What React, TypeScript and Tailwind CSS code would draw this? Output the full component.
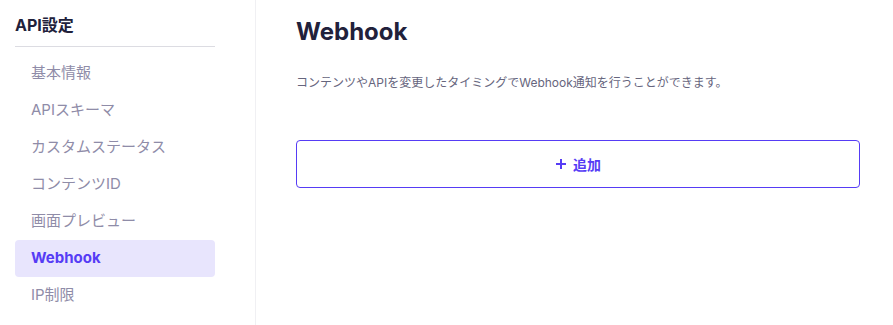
import React from 'react';

const menuItems = ['基本情報', 'APIスキーマ', 'カスタムステータス', 'コンテンツID', '画面プレビュー', 'Webhook', 'IP制限'];

const App: React.FC = () => {
  const active = 'Webhook';

  return (
    <div
      className="flex h-[325px] w-[893px] bg-white overflow-hidden"
      style={{ fontFamily: 'Inter, "Noto Sans CJK JP", sans-serif' }}
    >
      <aside className="w-[256px] shrink-0 border-r border-[#f0f0f3] pl-[15px] pr-[40px] pt-[14px]">
        <h2 className="text-[16px] font-bold leading-[22px] text-[#21213b] pb-[10px] border-b border-[#dcdce2]">API設定</h2>
        <ul className="mt-[8px] flex flex-col">
          {menuItems.map(item => (
            <li
              key={item}
              className={
                item === active
                  ? 'h-[37px] flex items-center pl-[16px] rounded-[4px] bg-[#e8e5fd] text-[#563cf5] font-bold text-[15px]'
                  : 'h-[37px] flex items-center pl-[16px] text-[#8f8ca8] text-[15px]'
              }
            >
              {item}
            </li>
          ))}
        </ul>
      </aside>

      <main className="flex-1 pl-[40px] pr-[33px] pt-[16px]">
        <h1 className="text-[24px] font-bold leading-[32px] text-[#21213b]">Webhook</h1>
        <p className="mt-[26px] text-[12px] leading-[18px] text-[#66657d]">
          コンテンツやAPIを変更したタイミングでWebhook通知を行うことができます。
        </p>
        <button
          type="button"
          className="mt-[48px] w-full h-[48px] flex items-center justify-center gap-[6px] rounded-[4px] border border-[#563cf5] text-[#563cf5] text-[14px] font-bold bg-white"
        >
          <svg width="12" height="12" viewBox="0 0 12 12" fill="none" stroke="currentColor" strokeWidth="2">
            <path d="M6 1v10M1 6h10" />
          </svg>
          <span>追加</span>
        </button>
      </main>
    </div>
  );
};

export default App;
